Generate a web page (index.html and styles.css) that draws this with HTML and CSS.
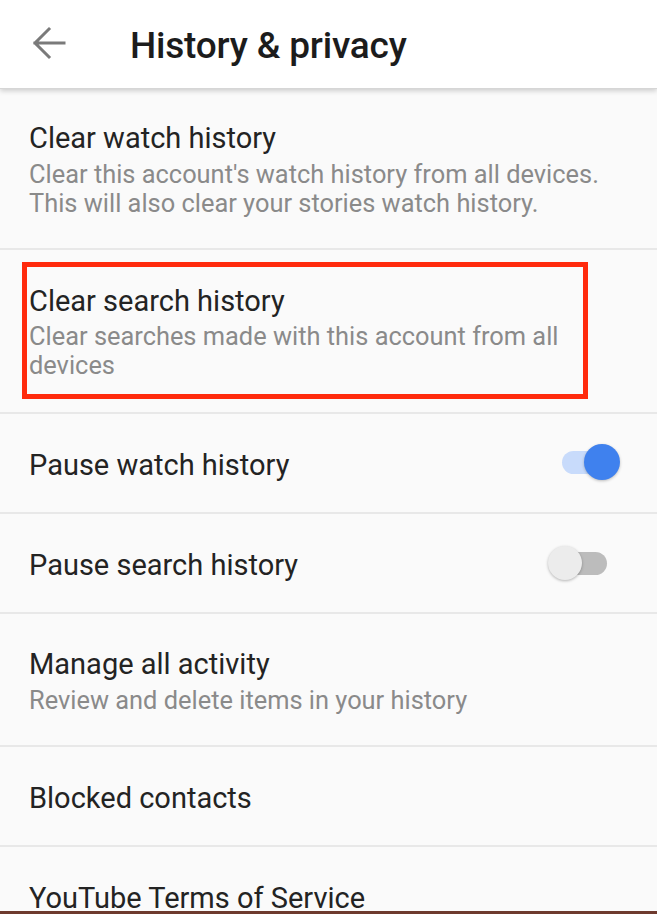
FILE: index.html
```html
<!DOCTYPE html>
<html>
<head>
<meta charset="utf-8">
<link rel="stylesheet" href="styles.css">
</head>
<body>
<header class="appbar">
  <svg class="back" width="40" height="40" viewBox="0 0 40 40">
    <path d="M34 20H5 M19 6L5 20L19 34" fill="none" stroke="#7a7a7a" stroke-width="3" stroke-linecap="square"/>
  </svg>
  <h1 class="title">History &amp; privacy</h1>
</header>
<main class="list">
  <div class="row multi first">
    <div class="row-title">Clear watch history</div>
    <div class="row-sub">Clear this account's watch history from all devices.<br>This will also clear your stories watch history.</div>
  </div>
  <div class="row boxed">
    <div class="highlight">
      <div class="row-title">Clear search history</div>
      <div class="row-sub">Clear searches made with this account from all<br>devices</div>
    </div>
  </div>
  <div class="row single toggle-row">
    <div class="row-title">Pause watch history</div>
    <div class="toggle on"><span class="track"></span><span class="thumb"></span></div>
  </div>
  <div class="row single toggle-row">
    <div class="row-title">Pause search history</div>
    <div class="toggle off"><span class="track"></span><span class="thumb"></span></div>
  </div>
  <div class="row multi">
    <div class="row-title">Manage all activity</div>
    <div class="row-sub">Review and delete items in your history</div>
  </div>
  <div class="row single">
    <div class="row-title">Blocked contacts</div>
  </div>
  <div class="row single last">
    <div class="row-title">YouTube Terms of Service</div>
  </div>
</main>
<div class="progress"></div>
</body>
</html>
```
FILE: styles.css
```css
html, body {
  margin: 0;
  padding: 0;
  background: #fafafa;
  font-family: Roboto, "Noto Sans", sans-serif;
  overflow: hidden;
  height: 914px;
}
.appbar {
  height: 88px;
  background: #ffffff;
  display: flex;
  align-items: center;
  box-shadow: 0 1px 0 #d6d6d6, 0 3px 5px rgba(0,0,0,0.18);
  position: relative;
  z-index: 2;
}
.back {
  margin-left: 30px;
  margin-top: -2px;
  flex: none;
}
.title {
  margin: 0 0 0 60px;
  font-size: 37px;
  font-weight: 500;
  color: #1c1c1c;
  letter-spacing: -0.2px;
  margin-top: 2px;
}
.list {
  display: flex;
  flex-direction: column;
}
.row {
  border-bottom: 2px solid #e8e8e8;
  padding: 0 0 0 29px;
}
.row-title {
  font-size: 29px;
  line-height: 36px;
  color: #232323;
}
.row-sub {
  font-size: 25.4px;
  line-height: 29px;
  color: #8a8a8a;
  margin-top: 4px;
}
.row.multi {
  padding-top: 32px;
  padding-bottom: 30px;
}
.row.boxed {
  padding: 12px 0 13px 22px;
}
.highlight {
  width: 554px;
  border: 5px solid #ff2a0c;
  padding: 16px 0 14px 2px;
}
.highlight .row-sub { margin-top: 3px; }
.row.single {
  padding-top: 33px;
  padding-bottom: 29px;
}
.row.last { border-bottom: none; }
.toggle-row {
  display: flex;
  align-items: center;
  justify-content: space-between;
}
.toggle {
  position: relative;
  width: 60px;
  height: 36px;
  flex: none;
}
.toggle .track {
  position: absolute;
  top: 7px;
  height: 23px;
  border-radius: 12px;
}
.toggle .thumb {
  position: absolute;
  border-radius: 50%;
}
.toggle.on {
  width: 58px;
  margin-right: 37px;
  margin-top: -6px;
}
.toggle.on .track {
  left: 0;
  width: 40px;
  background: #c8dbfb;
}
.toggle.on .thumb {
  right: 0;
  top: 0;
  width: 36px;
  height: 36px;
  background: #3f81ee;
  box-shadow: 0 1px 3px rgba(0,0,0,0.25);
}
.toggle.off {
  width: 59px;
  margin-right: 50px;
  margin-top: -4px;
}
.toggle.off .track {
  right: 0;
  width: 42px;
  background: #bcbcbc;
}
.toggle.off .thumb {
  left: 0;
  top: 1px;
  width: 34px;
  height: 34px;
  background: #ececec;
  box-shadow: 0 1px 3px rgba(0,0,0,0.28);
}
.progress {
  position: fixed;
  left: 0;
  right: 0;
  bottom: 0;
  height: 3px;
  background: #6e3a2e;
  z-index: 3;
}
```
